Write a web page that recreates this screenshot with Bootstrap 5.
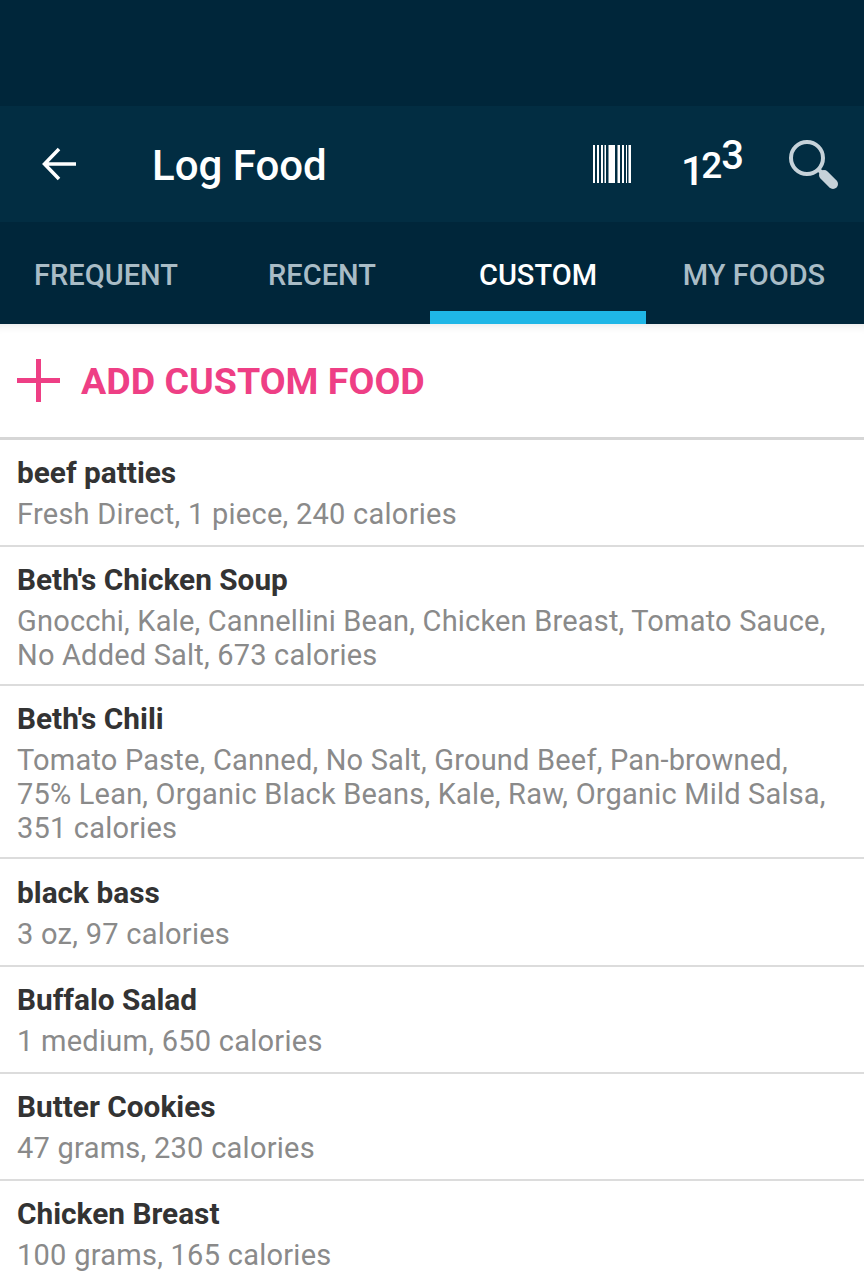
<!DOCTYPE html>
<html lang="en">
  <head>
    <meta charset="UTF-8" />
    <title>Log Food</title>
    <link href="https://cdn.jsdelivr.net/npm/bootstrap@5.3.0/dist/css/bootstrap.min.css" rel="stylesheet" />
    <style>
      body { font-family: Roboto, "Liberation Sans", sans-serif; background: #fff; overflow: hidden; }
      .status-fill { height: 106px; background: #00263a; }
      .title-bar { height: 116px; background: #022d42; color: #fff; }
      .back-slot { width: 152px; padding-left: 42px; }
      .bar-title { font-size: 42px; font-weight: 500; line-height: 1; margin: 4px 0 0; }
      .num-icon { font-weight: 500; line-height: 1; width: 60px; height: 48px; margin: 0 45px 0 50px; }
      .digit-a { font-size: 41px; margin-top: 11px; letter-spacing: -3px; }
      .digit-b { font-size: 37px; margin-top: 7px; letter-spacing: -1px; }
      .digit-c { font-size: 40px; margin-top: -4px; }
      .tab-strip { height: 102px; background: #00263a; }
      .tab-row { margin-left: -2px; height: 100%; }
      .tab-item { flex: 0 0 216px; height: 100%; font-size: 29px; font-weight: 500; color: #a9bcc6; padding-top: 36px; text-align: center; line-height: 34px; }
      .tab-item.on { color: #fff; border-bottom: 13px solid #1fb6e6; }
      .add-row { height: 113px; padding-left: 17px; color: #ee3f85; box-shadow: inset 0 10px 8px -8px #e8e8e8; }
      .add-text { font-size: 37.6px; font-weight: 700; margin: 3px 0 0 21px; line-height: 1; }
      .food-row { border-top: 2px solid #dcdcdc; padding: 0 17px 12px; min-height: 107px; }
      .food-row.first { border-top: 3px solid #d6d6d6; min-height: 108px; }
      .food-row.roomy { min-height: 108px; padding-top: 1px; }
      .food-name { font-size: 29.8px; font-weight: 700; color: #333; line-height: 34px; padding-top: 16px; }
      .food-info { font-size: 29px; color: #8a8a8a; line-height: 34px; padding-top: 7px; letter-spacing: .26px; }
      .food-info.wide-text { letter-spacing: .19px; }
    </style>
  </head>
  <body>
    <div class="status-fill"></div>
    <div class="title-bar d-flex align-items-center">
      <div class="back-slot d-flex">
        <svg width="34" height="34" viewBox="0 0 34 34" fill="none" stroke="#fff" stroke-width="3.5"><path d="M34 17H3M17 2 2.500 17 17 32"/></svg>
      </div>
      <h1 class="bar-title flex-grow-1">Log Food</h1>
      <svg width="38" height="38" viewBox="0 0 38 38" fill="#fff"><path d="M0 0h2v38H0zM4 0h2v38H4zM8 0h2v38H8zM11.500 0H13v38h-1.500zM15.500 0H22v38h-6.500zM24.500 0H27v38h-2.500zM29 0h2v38h-2zM33 0h1v38h-1zM35.500 0H38v38h-2.500z"/></svg>
      <div class="num-icon d-flex flex-shrink-0"><span class="digit-a">1</span><span class="digit-b">2</span><span class="digit-c">3</span></div>
      <svg class="me-4" width="54" height="54" viewBox="0 0 54 54" fill="none" stroke="#c6d2d9"><circle cx="21" cy="21" r="16" stroke-width="4"/><path d="M33 33l4 4" stroke-width="4"/><path d="M38 38l9 9" stroke-width="10" stroke-linecap="round"/></svg>
    </div>
    <div class="tab-strip">
      <div class="tab-row d-flex">
        <div class="tab-item">FREQUENT</div>
        <div class="tab-item">RECENT</div>
        <div class="tab-item on">CUSTOM</div>
        <div class="tab-item">MY FOODS</div>
      </div>
    </div>
    <div class="add-row d-flex align-items-center">
      <svg width="43" height="43" viewBox="0 0 43 43" fill="#ee3f85"><path d="M0 19h43v5H0zM19 0h5v43h-5z"/></svg>
      <span class="add-text">ADD CUSTOM FOOD</span>
    </div>
    <div class="food-row first"><div class="food-name">beef patties</div><div class="food-info">Fresh Direct, 1 piece, 240 calories</div></div>
    <div class="food-row"><div class="food-name">Beth's Chicken Soup</div><div class="food-info wide-text">Gnocchi, Kale, Cannellini Bean, Chicken Breast, Tomato Sauce, No Added Salt, 673 calories</div></div>
    <div class="food-row"><div class="food-name">Beth's Chili</div><div class="food-info wide-text">Tomato Paste, Canned, No Salt, Ground Beef, Pan-browned, 75% Lean, Organic Black Beans, Kale, Raw, Organic Mild Salsa, 351 calories</div></div>
    <div class="food-row roomy"><div class="food-name">black bass</div><div class="food-info">3 oz, 97 calories</div></div>
    <div class="food-row"><div class="food-name">Buffalo Salad</div><div class="food-info">1 medium, 650 calories</div></div>
    <div class="food-row"><div class="food-name">Butter Cookies</div><div class="food-info">47 grams, 230 calories</div></div>
    <div class="food-row"><div class="food-name">Chicken Breast</div><div class="food-info">100 grams, 165 calories</div></div>
    <script src="https://cdn.jsdelivr.net/npm/bootstrap@5.3.0/dist/js/bootstrap.bundle.min.js"></script>
  </body>
</html>
